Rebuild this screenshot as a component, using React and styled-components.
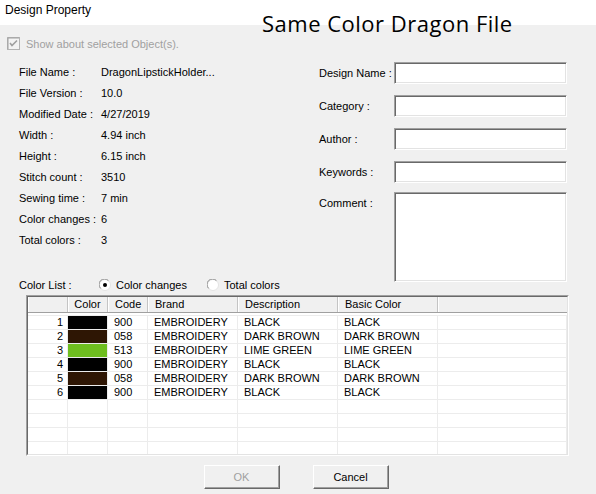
import styled, { createGlobalStyle } from "styled-components"

const GlobalStyle = createGlobalStyle`
    html, body {
        margin: 0;
        padding: 0;
        background: #f0f0f0;
    }
    body {
        font-family: "Liberation Sans", Arial, sans-serif;
        font-size: 11px;
        color: #000;
    }
`

const Window = styled.div`
    width: 596px;
    height: 494px;
    background: #f0f0f0;
    position: relative;
    overflow: hidden;
`
const TitleBar = styled.div`
    height: 25px;
    background: #fff;
    padding: 3px 0 0 5px;
    box-sizing: border-box;
    font-size: 12px;
    line-height: 14px;
`
const Overlay = styled.div`
    position: absolute;
    left: 262px;
    top: 12px;
    font-family: "Open Sans", "Noto Sans", sans-serif;
    font-size: 22px;
    line-height: 22px;
    letter-spacing: 0.5px;
    color: #000;
    white-space: nowrap;
`
const CheckRow = styled.div`
    display: flex;
    align-items: center;
    gap: 6px;
    height: 13px;
    margin: 12px 0 0 7px;
    color: #a0a0a0;
`
const Top = styled.div`
    display: flex;
    margin-top: 12px;
`
const LeftCol = styled.div`
    width: 319px;
    padding-left: 19px;
    box-sizing: border-box;
`
const InfoRow = styled.div`
    display: grid;
    grid-template-columns: 82px 1fr;
    height: 21px;
    line-height: 21px;
    white-space: nowrap;
`
const ColorListRow = styled.div`
    display: flex;
    align-items: center;
    height: 14px;
    margin-top: 27px;
`
const ColorListLabel = styled.span`
    width: 80px;
`
const RadioOption = styled.label`
    display: flex;
    align-items: center;
    gap: 5px;
    min-width: ${p => p.$w || 0}px;
`
const Form = styled.div`
    display: flex;
    flex-direction: column;
    gap: 11px;
`
const Field = styled.div`
    display: flex;
    align-items: ${p => (p.$top ? "flex-start" : "center")};
    margin-top: ${p => (p.$top ? -2 : 0)}px;
`
const FieldLabel = styled.span`
    width: 75px;
    line-height: 14px;
    padding-top: ${p => (p.$top ? 4 : 0)}px;
    white-space: nowrap;
`
const TextBox = styled.div`
    width: 173px;
    height: ${p => p.$h || 22}px;
    box-sizing: border-box;
    background: #fff;
    border: 1px solid;
    border-color: #a0a0a0 #fff #fff #a0a0a0;
    box-shadow: inset 1px 1px 0 #696969, inset -1px -1px 0 #e3e3e3;
`
const GridFrame = styled.div`
    margin: 3px 0 0 26px;
    width: 543px;
    height: 161px;
    box-sizing: border-box;
    border: 1px solid;
    border-color: #a0a0a0 #fff #fff #a0a0a0;
`
const GridInner = styled.div`
    height: 100%;
    box-sizing: border-box;
    border: 1px solid;
    border-color: #696969 #e3e3e3 #e3e3e3 #696969;
    background: #fff;
    overflow: hidden;
`
const cols = "40px 40px 40px 90px 100px 100px 1fr"
const HeaderRow = styled.div`
    display: grid;
    grid-template-columns: ${cols};
    height: 16px;
    box-sizing: border-box;
    background: #f0f0f0;
    border-bottom: 1px solid #a0a0a0;
`
const HeaderCell = styled.div`
    line-height: 15px;
    text-align: ${p => (p.$center ? "center" : "left")};
    padding-left: ${p => (p.$center ? 0 : 7)}px;
    border-right: ${p => (p.$last ? "none" : "1px solid #c4c4c4")};
    box-shadow: inset 1px 0 0 #fff;
    white-space: nowrap;
`
const GridBody = styled.div`
    padding-top: 2px;
`
const Row = styled.div`
    display: grid;
    grid-template-columns: ${cols};
    height: 14px;
    box-sizing: border-box;
    border-top: 1px solid #ececec;
`
const Cell = styled.div`
    line-height: 13px;
    padding: 0 ${p => (p.$right ? 4 : 0)}px 0 ${p => (p.$right ? 0 : 6)}px;
    text-align: ${p => (p.$right ? "right" : "left")};
    border-right: 1px solid #ececec;
    white-space: nowrap;
    overflow: hidden;
`
const Swatch = styled.div`
    background: ${p => p.$color};
    border-right: 1px solid #ececec;
`
const Buttons = styled.div`
    display: flex;
    justify-content: center;
    gap: 33px;
    margin-top: 9px;
    padding-right: 4px;
`
const Button = styled.button`
    width: 76px;
    height: 24px;
    font-family: "Liberation Sans", Arial, sans-serif;
    font-size: 11px;
    background: #f0f0f0;
    color: ${p => (p.disabled ? "#a0a0a0" : "#000")};
    border: 1px solid;
    border-color: #fff #696969 #696969 #fff;
    box-shadow: inset -1px -1px 0 #a0a0a0;
    padding: 0;
`

const CheckIcon = () => (
    <svg width="13" height="13" viewBox="0 0 13 13">
        <rect x="0.5" y="0.5" width="12" height="12" fill="#f4f4f4" stroke="#b4b4b4" />
        <path d="M1 12V1h11" fill="none" stroke="#a0a0a0" />
        <path d="M3 6l2 2.5 5-5" fill="none" stroke="#a0a0a0" strokeWidth="1.6" />
    </svg>
)

const RadioIcon = ({ checked }) => (
    <svg width="12" height="12" viewBox="0 0 12 12">
        <circle cx="6" cy="6" r="5.5" fill="#fff" stroke="#e3e3e3" />
        <path d="M1.6 9.4A5 5 0 0 1 9.4 1.6" fill="none" stroke="#8a8a8a" />
        {checked && <circle cx="6" cy="6" r="2" fill="#000" />}
    </svg>
)

const info = [
    ["File Name :", "DragonLipstickHolder..."],
    ["File Version :", "10.0"],
    ["Modified Date :", "4/27/2019"],
    ["Width :", "4.94 inch"],
    ["Height :", "6.15 inch"],
    ["Stitch count :", "3510"],
    ["Sewing time :", "7 min"],
    ["Color changes :", "6"],
    ["Total colors :", "3"],
]

const BLACK = "#000000"
const BROWN = "#2e1604"
const LIME = "#6ebe1f"

const colors = [
    [BLACK, "900", "EMBROIDERY", "BLACK", "BLACK"],
    [BROWN, "058", "EMBROIDERY", "DARK BROWN", "DARK BROWN"],
    [LIME, "513", "EMBROIDERY", "LIME GREEN", "LIME GREEN"],
    [BLACK, "900", "EMBROIDERY", "BLACK", "BLACK"],
    [BROWN, "058", "EMBROIDERY", "DARK BROWN", "DARK BROWN"],
    [BLACK, "900", "EMBROIDERY", "BLACK", "BLACK"],
]

const App = () => {
    const empty = Array.from({ length: 5 })
    return (
        <Window>
            <GlobalStyle />
            <TitleBar>Design Property</TitleBar>
            <Overlay>Same Color Dragon File</Overlay>

            <CheckRow>
                <CheckIcon />
                <span>Show about selected Object(s).</span>
            </CheckRow>

            <Top>
                <LeftCol>
                    {info.map(([k, v]) => (
                        <InfoRow key={k}>
                            <span>{k}</span>
                            <span>{v}</span>
                        </InfoRow>
                    ))}
                    <ColorListRow>
                        <ColorListLabel>Color List :</ColorListLabel>
                        <RadioOption $w={108}>
                            <RadioIcon checked />
                            Color changes
                        </RadioOption>
                        <RadioOption>
                            <RadioIcon />
                            Total colors
                        </RadioOption>
                    </ColorListRow>
                </LeftCol>

                <Form>
                    <Field>
                        <FieldLabel>Design Name :</FieldLabel>
                        <TextBox />
                    </Field>
                    <Field>
                        <FieldLabel>Category :</FieldLabel>
                        <TextBox />
                    </Field>
                    <Field>
                        <FieldLabel>Author :</FieldLabel>
                        <TextBox />
                    </Field>
                    <Field>
                        <FieldLabel>Keywords :</FieldLabel>
                        <TextBox />
                    </Field>
                    <Field $top>
                        <FieldLabel $top>Comment :</FieldLabel>
                        <TextBox $h={90} />
                    </Field>
                </Form>
            </Top>

            <GridFrame>
                <GridInner>
                    <HeaderRow>
                        <HeaderCell />
                        <HeaderCell $center>Color</HeaderCell>
                        <HeaderCell>Code</HeaderCell>
                        <HeaderCell>Brand</HeaderCell>
                        <HeaderCell>Description</HeaderCell>
                        <HeaderCell>Basic Color</HeaderCell>
                        <HeaderCell $last />
                    </HeaderRow>
                    <GridBody>
                        {colors.map(([c, code, brand, desc, basic], i) => (
                            <Row key={i}>
                                <Cell $right>{i + 1}</Cell>
                                <Swatch $color={c} />
                                <Cell>{code}</Cell>
                                <Cell>{brand}</Cell>
                                <Cell>{desc}</Cell>
                                <Cell>{basic}</Cell>
                                <Cell />
                            </Row>
                        ))}
                        {empty.map((_, i) => (
                            <Row key={"e" + i}>
                                <Cell />
                                <Cell />
                                <Cell />
                                <Cell />
                                <Cell />
                                <Cell />
                                <Cell />
                            </Row>
                        ))}
                    </GridBody>
                </GridInner>
            </GridFrame>

            <Buttons>
                <Button disabled>OK</Button>
                <Button>Cancel</Button>
            </Buttons>
        </Window>
    )
}

export default App
